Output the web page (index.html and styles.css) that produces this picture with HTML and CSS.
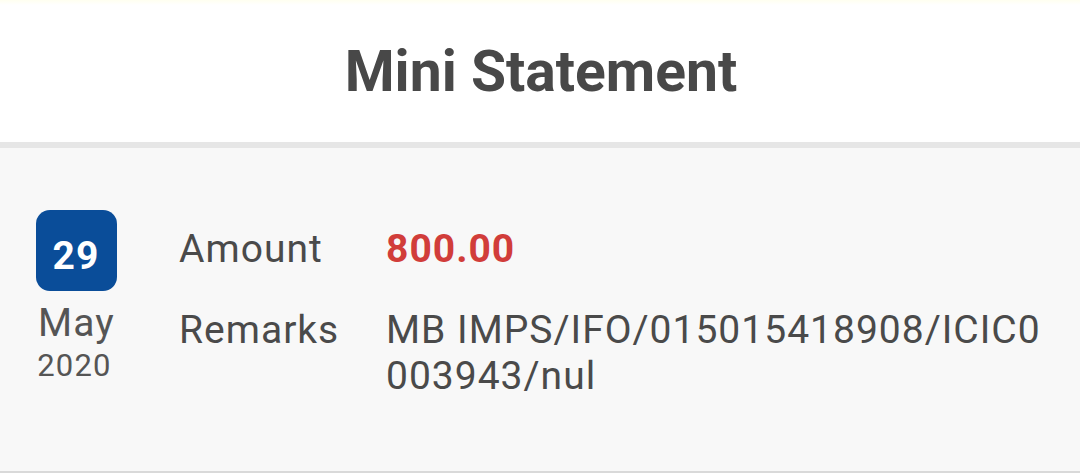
FILE: index.html
```html
<!DOCTYPE html>
<html>
<head>
<meta charset="utf-8">
<link rel="stylesheet" href="styles.css">
</head>
<body>
<header class="topbar">
  <h1 class="title">Mini Statement</h1>
</header>
<div class="divider"></div>
<main class="list">
  <section class="entry">
    <div class="date">
      <div class="day">29</div>
      <div class="month">May</div>
      <div class="year">2020</div>
    </div>
    <div class="details">
      <div class="label">Amount</div>
      <div class="amount">800.00</div>
      <div class="label">Remarks</div>
      <div class="remarks">MB IMPS/IFO/015015418908/ICIC0003943/nul</div>
    </div>
  </section>
</main>
</body>
</html>
```
FILE: styles.css
```css
* { box-sizing: border-box; }
html, body {
  margin: 0;
  padding: 0;
  width: 1080px;
  height: 473px;
  overflow: hidden;
  background: #f8f8f8;
  font-family: Roboto, "Liberation Sans", sans-serif;
}
.topbar {
  height: 142px;
  background: linear-gradient(#fffff0 0, #ffffff 5px);
  display: flex;
  align-items: center;
  justify-content: center;
}
.title {
  margin: 0;
  font-size: 57px;
  font-weight: 700;
  color: #484848;
  padding-left: 2px;
}
.divider {
  height: 6px;
  background: #e6e6e6;
}
.list {
  height: 325px;
  border-bottom: 2px solid #d9d9d9;
  background: #f8f8f8;
}
.entry {
  display: flex;
  padding: 62px 0 0 35px;
}
.date {
  width: 82px;
  display: flex;
  flex-direction: column;
  align-items: center;
}
.day {
  width: 81px;
  height: 81px;
  background: #0a4d99;
  border-radius: 14px;
  color: #fff;
  font-weight: 700;
  font-size: 39px;
  letter-spacing: 1px;
  padding-top: 10px;
  display: flex;
  align-items: center;
  justify-content: center;
}
.month {
  font-size: 39px;
  letter-spacing: 1.2px;
  line-height: 46px;
  color: #555;
  margin-top: 9px;
  margin-left: 1px;
}
.year {
  font-size: 31px;
  letter-spacing: 1.2px;
  line-height: 30px;
  color: #555;
  margin-top: 5px;
  margin-right: 3px;
}
.details {
  margin-left: 62px;
  display: grid;
  grid-template-columns: 207px 665px;
  row-gap: 35px;
  padding-top: 16px;
  font-size: 39px;
  letter-spacing: 1px;
  line-height: 46px;
  color: #4a4a4a;
}
.amount {
  color: #d13d3a;
  font-weight: 700;
}
.remarks {
  word-break: break-all;
}
```
